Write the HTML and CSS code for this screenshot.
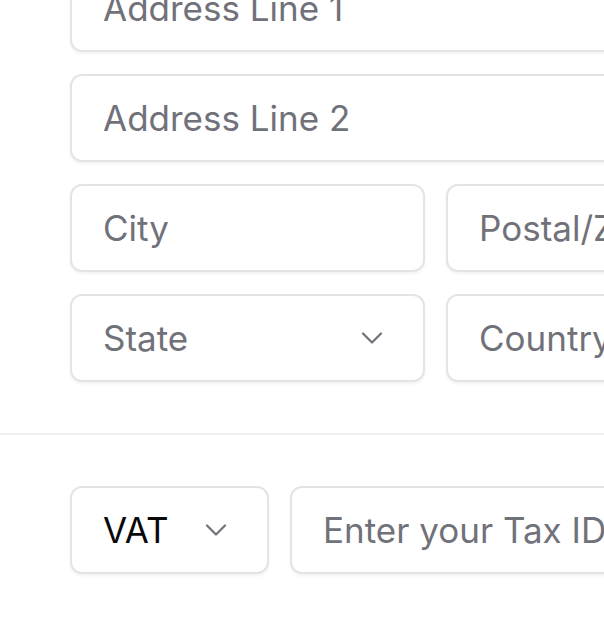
FILE: index.html
```html
<!DOCTYPE html>
<html lang="en">
<head>
<meta charset="utf-8">
<link rel="stylesheet" href="styles.css">
</head>
<body>
<div class="page">
  <section class="address">
    <div class="field"><span class="ph">Address Line 1</span></div>
    <div class="field"><span class="ph">Address Line 2</span></div>
    <div class="row">
      <div class="field"><span class="ph">City</span></div>
      <div class="field"><span class="ph">Postal/Zip Code</span></div>
    </div>
    <div class="row">
      <div class="field select"><span class="ph">State</span>
        <svg class="chev" viewBox="0 0 22 12" width="22" height="12"><path d="M2 1.5 L11 10.5 L20 1.5" fill="none" stroke="#71717a" stroke-width="2.2" stroke-linecap="round" stroke-linejoin="round"/></svg>
      </div>
      <div class="field"><span class="ph">Country</span></div>
    </div>
  </section>
  <hr class="divider">
  <section class="tax">
    <div class="field select vat"><span class="val">VAT</span>
      <svg class="chev" viewBox="0 0 22 12" width="22" height="12"><path d="M2 1.5 L11 10.5 L20 1.5" fill="none" stroke="#71717a" stroke-width="2.2" stroke-linecap="round" stroke-linejoin="round"/></svg>
    </div>
    <div class="field taxid"><span class="ph">Enter your Tax ID</span></div>
  </section>
</div>
</body>
</html>
```
FILE: styles.css
```css
html, body {
  margin: 0;
  padding: 0;
  background: #ffffff;
  overflow: hidden;
}
body {
  width: 604px;
  height: 630px;
  font-family: "Inter", "Noto Sans", sans-serif;
}
.page {
  width: 900px;
  margin-top: -36px;
}
.address {
  display: flex;
  flex-direction: column;
  gap: 22px;
  padding: 0 0 0 70px;
  width: 731px;
}
.row {
  display: grid;
  grid-template-columns: 355px 355px;
  column-gap: 21px;
}
.field {
  box-sizing: border-box;
  height: 88px;
  border: 2px solid #e4e4e7;
  border-radius: 12px;
  background: #fff;
  box-shadow: 0 2px 3px rgba(0, 0, 0, 0.05);
  display: flex;
  align-items: center;
  padding: 0 31px;
  font-size: 35px;
  line-height: 1;
}
.ph {
  color: #71717a;
}
.val {
  color: #09090b;
}
.select {
  justify-content: space-between;
  padding-right: 40px;
}
.chev {
  display: block;
  width: 22px;
  height: 12px;
}
.divider {
  border: 0;
  height: 2px;
  background: #f0f0f1;
  margin: 51px 0 51px 0;
  width: 900px;
}
.tax {
  display: flex;
  gap: 21px;
  padding-left: 70px;
}
.vat {
  width: 199px;
  flex: none;
}
.taxid {
  width: 520px;
  flex: none;
}
```
